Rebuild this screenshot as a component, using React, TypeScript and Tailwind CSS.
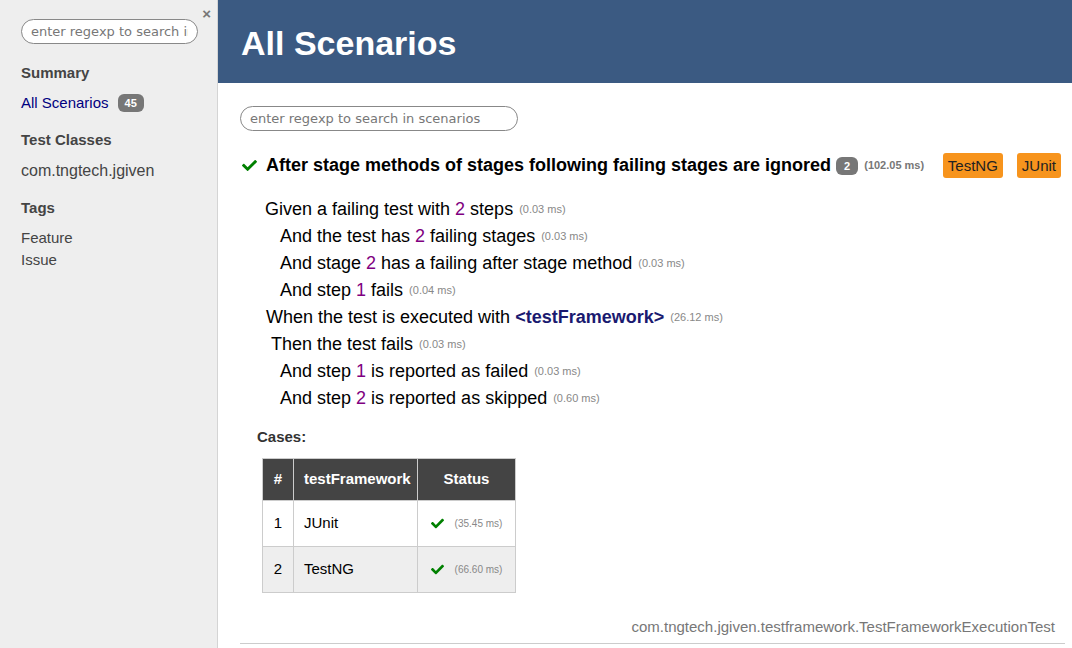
import { FaCheck } from "react-icons/fa";

type Part = string | { v: string; kind: "num" | "arg" };

interface Step {
  indent: string;
  parts: Part[];
  ms: string;
}

const steps: Step[] = [
  { indent: "pl-[25px]", parts: ["Given a failing test with ", { v: "2", kind: "num" }, " steps"], ms: "0.03" },
  { indent: "pl-[40px]", parts: ["And the test has ", { v: "2", kind: "num" }, " failing stages"], ms: "0.03" },
  { indent: "pl-[40px]", parts: ["And stage ", { v: "2", kind: "num" }, " has a failing after stage method"], ms: "0.03" },
  { indent: "pl-[40px]", parts: ["And step ", { v: "1", kind: "num" }, " fails"], ms: "0.04" },
  { indent: "pl-[26px]", parts: ["When the test is executed with ", { v: "<testFramework>", kind: "arg" }], ms: "26.12" },
  { indent: "pl-[31px]", parts: ["Then the test fails"], ms: "0.03" },
  { indent: "pl-[40px]", parts: ["And step ", { v: "1", kind: "num" }, " is reported as failed"], ms: "0.03" },
  { indent: "pl-[40px]", parts: ["And step ", { v: "2", kind: "num" }, " is reported as skipped"], ms: "0.60" },
];

const cases = [
  { n: 1, fw: "JUnit", ms: "35.45" },
  { n: 2, fw: "TestNG", ms: "66.60" },
];

const inputFont = { fontFamily: '"DejaVu Sans", sans-serif' };

function Sidebar() {
  return (
    <aside className="relative w-[218px] shrink-0 bg-[#eeeeee] border-r border-[#d4d4d4] pl-[21px] pt-[19px]">
      <span className="absolute right-[6px] top-[3px] text-[15px] font-bold text-[#777]">×</span>
      <input
        style={inputFont}
        className="w-[177px] h-[25px] rounded-full border border-[#888] bg-white px-[9px] text-[13px] text-[#333] placeholder-[#777] outline-none"
        placeholder="enter regexp to search in tags and classes"
      />
      <h3 className="mt-[18px] text-[15px] font-bold text-[#444]">Summary</h3>
      <div className="mt-[7px] flex items-center gap-[9px]">
        <span className="text-[15px] text-[#000080]">All Scenarios</span>
        <span className="rounded-[6px] bg-[#777] px-[7px] py-[2px] text-[11px] font-bold leading-[14px] text-white">45</span>
      </div>
      <h3 className="mt-[15px] text-[15px] font-bold text-[#444]">Test Classes</h3>
      <div className="mt-[7px] text-[16px] text-[#444]">com.tngtech.jgiven</div>
      <h3 className="mt-[14px] text-[15px] font-bold text-[#444]">Tags</h3>
      <div className="mt-[8px] text-[15px] leading-[22px] text-[#444]">
        <div>Feature</div>
        <div>Issue</div>
      </div>
    </aside>
  );
}

function Ms({ v }: { v: string }) {
  return <span className="ml-[6px] text-[11px] text-[#888]">({v} ms)</span>;
}

export default function App() {
  return (
    <div className="flex h-[648px] w-[1072px] overflow-hidden bg-white text-black" style={{ fontFamily: '"Liberation Sans", Arial, sans-serif' }}>
      <Sidebar />
      <main className="flex flex-1 flex-col">
        <header className="h-[83px] shrink-0 bg-[#3b5a82] pl-[23px] pt-[23px]">
          <h1 className="text-[34px] font-bold leading-[40px] text-white">All Scenarios</h1>
        </header>

        <div className="flex flex-1 flex-col pl-[22px] pr-[7px]">
          <input
            style={inputFont}
            className="mt-[23px] w-[278px] h-[25px] rounded-full border border-[#888] bg-white px-[9px] text-[13px] placeholder-[#777] outline-none"
            placeholder="enter regexp to search in scenarios"
          />

          <div className="mt-[21px] flex items-center">
            <FaCheck className="ml-[2px] text-[15px] text-[#008000]" />
            <h2 className="ml-[9px] text-[18px] font-bold">After stage methods of stages following failing stages are ignored</h2>
            <span className="ml-[5px] rounded-[6px] bg-[#777] px-[8px] py-[2px] text-[11px] font-bold leading-[14px] text-white">2</span>
            <span className="ml-[6px] text-[11px] font-bold text-[#777]">(102.05 ms)</span>
            <div className="ml-auto mr-[4px] flex gap-[14px]">
              <span className="rounded-[3px] bg-[#f7941d] px-[5px] py-[3px] text-[15px] leading-[19px] text-[#222]">TestNG</span>
              <span className="rounded-[3px] bg-[#f7941d] px-[5px] py-[3px] text-[15px] leading-[19px] text-[#222]">JUnit</span>
            </div>
          </div>

          <div className="mt-[17px] flex flex-col">
            {steps.map((s, i) => (
              <div key={i} className={`${s.indent} h-[27px] flex items-center text-[18px]`}>
                <span className="whitespace-pre">
                  {s.parts.map((p, j) =>
                    typeof p === "string" ? (
                      <span key={j}>{p}</span>
                    ) : p.kind === "num" ? (
                      <span key={j} className="text-[#800080]">{p.v}</span>
                    ) : (
                      <span key={j} className="font-bold text-[#1a1a70]">{p.v}</span>
                    )
                  )}
                </span>
                <Ms v={s.ms} />
              </div>
            ))}
          </div>

          <h4 className="mt-[14px] pl-[17px] text-[15px] font-bold text-[#333]">Cases:</h4>

          <table className="ml-[22px] mt-[9px] w-[254px] border-collapse text-[15px]">
            <thead>
              <tr className="h-[42px] bg-[#444] text-white">
                <th className="w-[31px] border border-[#ccc] font-bold">#</th>
                <th className="w-[124px] border border-[#ccc] pl-[10px] text-left font-bold">testFramework</th>
                <th className="border border-[#ccc] font-bold">Status</th>
              </tr>
            </thead>
            <tbody>
              {cases.map((c) => (
                <tr key={c.n} className={`h-[46px] ${c.n % 2 === 0 ? "bg-[#eeeeee]" : "bg-white"}`}>
                  <td className="border border-[#ccc] text-center">{c.n}</td>
                  <td className="border border-[#ccc] pl-[10px]">{c.fw}</td>
                  <td className="border border-[#ccc]">
                    <div className="flex items-center justify-center">
                      <FaCheck className="text-[13px] text-[#008000]" />
                      <span className="ml-[11px] text-[10px] text-[#888]">({c.ms} ms)</span>
                    </div>
                  </td>
                </tr>
              ))}
            </tbody>
          </table>

          <div className="mt-auto pb-[4px]">
            <div className="pr-[10px] text-right text-[15px] text-[#777]">com.tngtech.jgiven.testframework.TestFrameworkExecutionTest</div>
            <div className="mt-[5px] h-px bg-[#ccc]" />
          </div>
        </div>
      </main>
    </div>
  );
}
